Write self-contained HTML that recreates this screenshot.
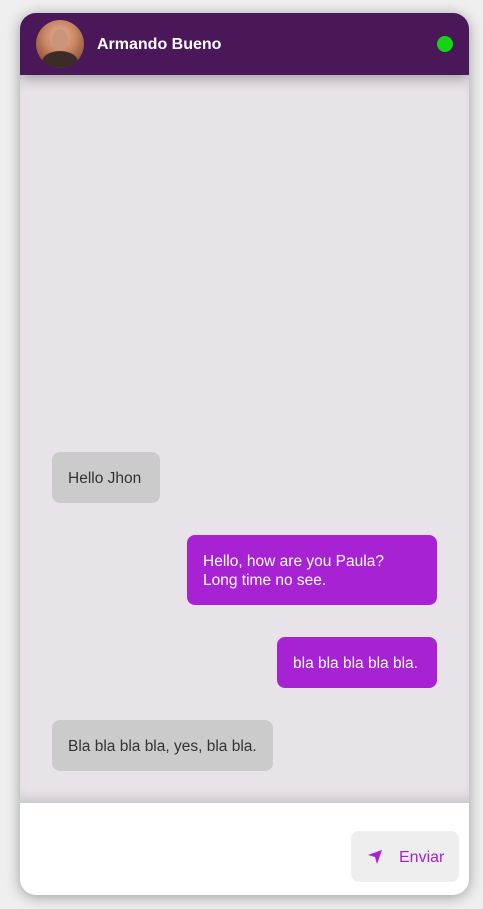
<!DOCTYPE html>
<html><head><style>
*{margin:0;padding:0;box-sizing:border-box}
body{width:483px;height:909px;background:#efefef;font-family:"Liberation Sans",sans-serif;position:relative;overflow:hidden}
.card{position:absolute;left:20px;top:13px;width:449px;height:882px;border-radius:16px;overflow:hidden;background:#fff;box-shadow:0 2px 14px rgba(0,0,0,.35)}
.hdr{position:absolute;left:0;top:0;width:449px;height:62px;background:#4a1758;z-index:2;box-shadow:0 4px 12px rgba(0,0,0,.3)}
.av{position:absolute;left:16px;top:7px;width:48px;height:48px;border-radius:50%;background:radial-gradient(circle at 50% 35%,#e8b59a 0,#c98766 40%,#9c5a3f 70%);overflow:hidden}
.av .head{position:absolute;left:16px;top:9px;width:16px;height:20px;border-radius:50%;background:#c9967b}
.av .body{position:absolute;left:6px;top:31px;width:36px;height:22px;border-radius:50% 50% 0 0;background:#3b2c27}
.name{position:absolute;left:77px;top:23px;color:#fff;font-weight:bold;font-size:16px}
.dot{position:absolute;left:417px;top:23px;width:16px;height:16px;border-radius:50%;background:#14d414}
.chat{position:absolute;left:0;top:62px;width:449px;height:728px;background:#e8e3e8;box-shadow:inset 0 -10px 12px -6px rgba(0,0,0,.15)}
.b{position:absolute;border-radius:8px;font-size:15.5px;line-height:19px;padding:17px 16px 13px}
.g{background:#cbcbcb;color:#333}
.p{background:#a722d3;color:#fff}
.btn{position:absolute;left:331px;top:818px;width:108px;height:51px;border-radius:8px;background:#eeeeee;color:#a722d3;font-size:16px}
</style></head><body>
<div class="card">
<div class="hdr"><div class="av"><div class="head"></div><div class="body"></div></div><div class="name">Armando Bueno</div><div class="dot"></div></div>
<div class="chat">
<div class="b g" style="left:32px;top:377px;width:108px;height:51px">Hello Jhon</div>
<div class="b p" style="left:167px;top:460px;width:250px;height:70px">Hello, how are you Paula?<br>Long time no see.</div>
<div class="b p" style="left:257px;top:562px;width:160px;height:51px">bla bla bla bla bla.</div>
<div class="b g" style="left:32px;top:645px;width:221px;height:51px">Bla bla bla bla, yes, bla bla.</div>
</div>
<div class="btn"><svg style="position:absolute;left:17px;top:19px" width="14" height="14" viewBox="0 0 14 14"><path d="M0 5 L14 0 L9 14 L7 7 Z" fill="#a722d3"/></svg><span style="position:absolute;left:48px;top:18px">Enviar</span></div>
</div>
</body></html>
